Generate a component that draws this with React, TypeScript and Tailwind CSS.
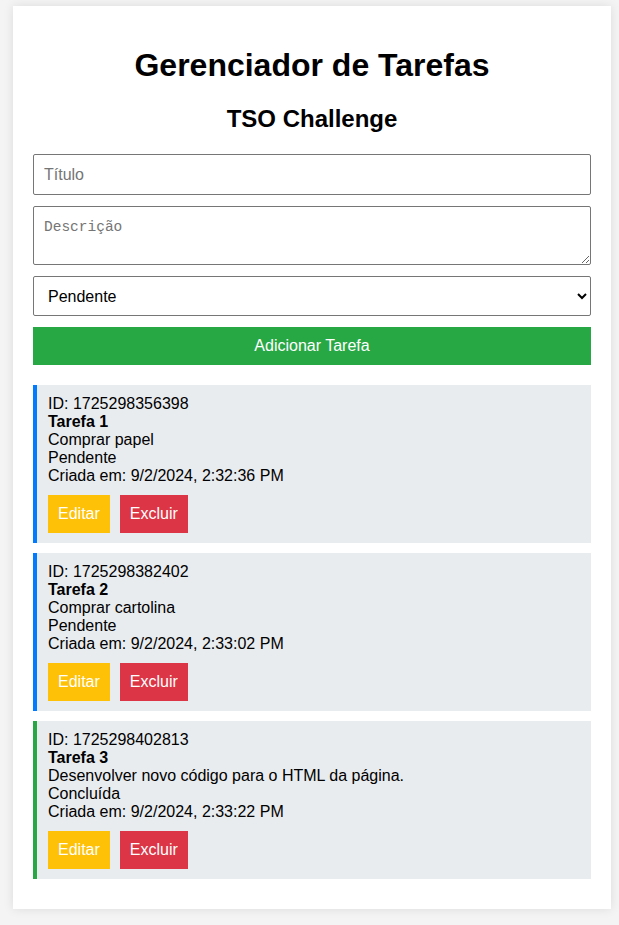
const tasks = [
  {
    id: "1725298356398",
    title: "Tarefa 1",
    desc: "Comprar papel",
    status: "Pendente",
    created: "9/2/2024, 2:32:36 PM",
  },
  {
    id: "1725298382402",
    title: "Tarefa 2",
    desc: "Comprar cartolina",
    status: "Pendente",
    created: "9/2/2024, 2:33:02 PM",
  },
  {
    id: "1725298402813",
    title: "Tarefa 3",
    desc: "Desenvolver novo código para o HTML da página.",
    status: "Concluída",
    created: "9/2/2024, 2:33:22 PM",
  },
]

function TaskItem({ task }: { task: (typeof tasks)[number] }) {
  const done = task.status === "Concluída"
  return (
    <li
      className={
        done
          ? "mb-[10px] border-l-4 border-[#28a745] bg-[#e9ecef] py-[10px] pr-[10px] pl-[11px]"
          : "mb-[10px] border-l-4 border-[#007bff] bg-[#e9ecef] py-[10px] pr-[10px] pl-[11px]"
      }
    >
      <div className="leading-[18px]">
        <div>ID: {task.id}</div>
        <div className="font-bold">{task.title}</div>
        <div>{task.desc}</div>
        <div>{task.status}</div>
        <div>Criada em: {task.created}</div>
      </div>
      <div className="mt-[10px] flex gap-[10px]">
        <button className="h-[38px] bg-[#ffc107] px-[10px] text-white">Editar</button>
        <button className="h-[38px] bg-[#dc3545] px-[10px] text-white">Excluir</button>
      </div>
    </li>
  )
}

export default function App() {
  return (
    <div className="min-h-[925px] bg-[#f4f4f4] pt-[6px] pb-4 font-['Liberation_Sans',Arial,sans-serif] text-[16px] text-black">
      <div className="ml-[13px] w-[598px] bg-white p-[20px] shadow-[0_0_10px_rgba(0,0,0,0.1)]">
        <h1 className="mt-[21px] text-center text-[32px] leading-[37px] font-bold">
          Gerenciador de Tarefas
        </h1>
        <h2 className="mt-[21px] mb-[21px] text-center text-[24px] leading-[28px] font-bold">
          TSO Challenge
        </h2>
        <form className="flex flex-col">
          <input
            type="text"
            placeholder="Título"
            className="mb-[11px] h-[41px] rounded-[2px] border border-[#767676] px-[10px] placeholder:text-[#757575]"
          />
          <textarea
            placeholder="Descrição"
            className="mb-[11px] h-[59px] rounded-[2px] border border-[#767676] px-[10px] pt-[12px] pb-[10px] font-['Liberation_Mono',monospace] text-[14.5px] leading-[16px] placeholder:text-[#757575]"
          />
          <select className="mb-[11px] h-[40px] rounded-[2px] border border-[#767676] px-[10px]">
            <option>Pendente</option>
            <option>Concluída</option>
          </select>
          <button type="button" className="h-[38px] bg-[#28a745] text-white">
            Adicionar Tarefa
          </button>
        </form>
        <ul className="mt-[20px]">
          {tasks.map((t) => (
            <TaskItem key={t.id} task={t} />
          ))}
        </ul>
      </div>
    </div>
  )
}
